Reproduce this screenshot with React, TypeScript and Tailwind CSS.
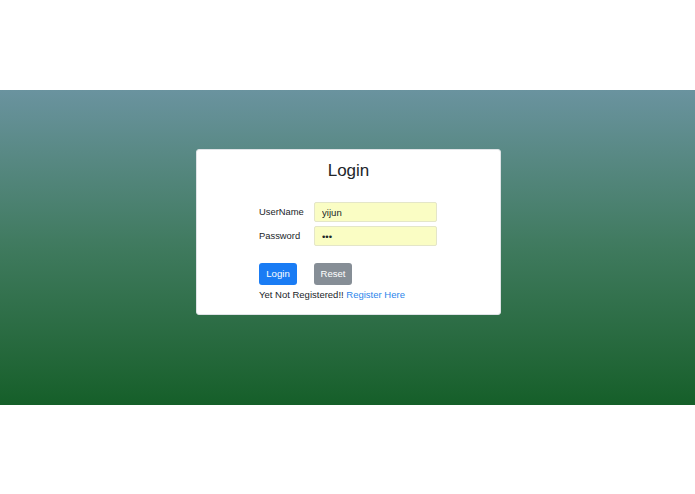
import { useState } from 'react';

export default function App() {
  const [username, setUsername] = useState('yijun');
  const [password, setPassword] = useState('abc');

  return (
    <div className="min-h-[494px] w-full bg-white font-['Liberation_Sans',Arial,sans-serif] text-[#212529]">
      <div className="h-[90px]" />
      <div className="h-[315px] bg-gradient-to-b from-[#6a939f] via-[#3f7a5e] to-[#155f29] pt-[59px] pl-[2px]">
        <div className="mx-auto w-[305px] h-[166px] rounded-[3px] border border-[#dfe3e6] bg-white pt-[11px]">
          <h1 className="text-center text-[17px] leading-[20px] font-normal">Login</h1>

          <form className="mt-[21px] ml-[62px] flex flex-col" onSubmit={(e) => e.preventDefault()}>
            <div className="flex items-center">
              <label className="w-[55px] text-[9.4px] leading-[12px]">UserName</label>
              <input
                value={username}
                onChange={(e) => setUsername(e.target.value)}
                className="h-[20px] w-[123px] rounded-[2px] border border-[#e4e6c8] bg-[#fafdc4] px-[7px] text-[9.6px] text-[#212529] outline-none"
              />
            </div>
            <div className="mt-[4px] flex items-center">
              <label className="w-[55px] text-[9.4px] leading-[12px]">Password</label>
              <input
                type="password"
                value={password}
                onChange={(e) => setPassword(e.target.value)}
                className="h-[20px] w-[123px] rounded-[2px] border border-[#e4e6c8] bg-[#fafdc4] px-[7px] text-[9.6px] text-[#212529] outline-none"
              />
            </div>

            <div className="mt-[17px] flex gap-[17px]">
              <button type="submit" className="h-[22px] w-[38px] rounded-[3px] bg-[#1a7cf4] text-[9.6px] text-white">
                Login
              </button>
              <button
                type="button"
                onClick={() => { setUsername(''); setPassword(''); }}
                className="h-[22px] w-[38px] rounded-[3px] bg-[#868e96] text-[9.6px] text-white"
              >
                Reset
              </button>
            </div>

            <p className="mt-[4px] text-[9.5px] leading-[12px]">
              Yet Not Registered!! <a href="#" className="text-[#2c85eb]">Register Here</a>
            </p>
          </form>
        </div>
      </div>
    </div>
  );
}
